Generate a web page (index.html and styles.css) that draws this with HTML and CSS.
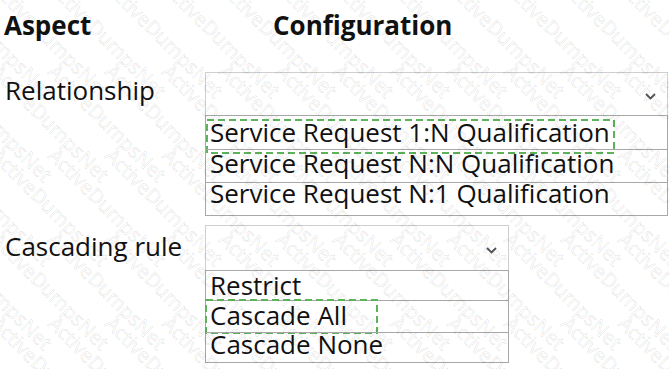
FILE: index.html
```html
<!DOCTYPE html>
<html lang="en">
<head>
<meta charset="utf-8">
<title>Aspect / Configuration</title>
<link rel="stylesheet" href="styles.css">
</head>
<body>
<div class="page">
  <div class="head">
    <div class="h-aspect">Aspect</div>
    <div class="h-config">Configuration</div>
  </div>

  <div class="row row-rel">
    <div class="label label-rel">Relationship</div>
    <div class="select select-rel">
      <div class="sel-head">
        <svg class="chev" width="11" height="7" viewBox="0 0 11 7"><path d="M1 1 L5.5 5.5 L10 1" fill="none" stroke="#555" stroke-width="1.8"/></svg>
      </div>
      <ul class="opts">
        <li class="opt o1">Service Request 1:N Qualification<svg class="pick pick-rel" viewBox="0 0 409 35" preserveAspectRatio="none"><rect x="1" y="1" width="407" height="33" fill="none" stroke="#5cb35a" stroke-width="2" stroke-dasharray="7 4"/></svg></li>
        <li class="opt o2">Service Request N:N Qualification</li>
        <li class="opt o3">Service Request N:1 Qualification</li>
      </ul>
    </div>
  </div>

  <div class="row row-casc">
    <div class="label label-casc">Cascading rule</div>
    <div class="select select-casc">
      <div class="sel-head sel-head-casc">
        <svg class="chev" width="11" height="7" viewBox="0 0 11 7"><path d="M1 1 L5.5 5.5 L10 1" fill="none" stroke="#555" stroke-width="1.8"/></svg>
      </div>
      <ul class="opts">
        <li class="opt c1">Restrict</li>
        <li class="opt c2">Cascade All<svg class="pick pick-casc" viewBox="0 0 173 35" preserveAspectRatio="none"><rect x="1" y="1" width="171" height="33" fill="none" stroke="#5cb35a" stroke-width="2" stroke-dasharray="7 4"/></svg></li>
        <li class="opt c3">Cascade None</li>
      </ul>
    </div>
  </div>

  <div class="wm" aria-hidden="true">
    <div class="wm-grid">
      <span>ActiveDumpsNet</span><span>ActiveDumpsNet</span><span>ActiveDumpsNet</span><span>ActiveDumpsNet</span><span>ActiveDumpsNet</span><span>ActiveDumpsNet</span><span>ActiveDumpsNet</span><span>ActiveDumpsNet</span><span>ActiveDumpsNet</span><span>ActiveDumpsNet</span><span>ActiveDumpsNet</span><span>ActiveDumpsNet</span><span>ActiveDumpsNet</span><span>ActiveDumpsNet</span>
      <span>ActiveDumpsNet</span><span>ActiveDumpsNet</span><span>ActiveDumpsNet</span><span>ActiveDumpsNet</span><span>ActiveDumpsNet</span><span>ActiveDumpsNet</span><span>ActiveDumpsNet</span><span>ActiveDumpsNet</span><span>ActiveDumpsNet</span><span>ActiveDumpsNet</span><span>ActiveDumpsNet</span><span>ActiveDumpsNet</span><span>ActiveDumpsNet</span><span>ActiveDumpsNet</span>
      <span>ActiveDumpsNet</span><span>ActiveDumpsNet</span><span>ActiveDumpsNet</span><span>ActiveDumpsNet</span><span>ActiveDumpsNet</span><span>ActiveDumpsNet</span><span>ActiveDumpsNet</span><span>ActiveDumpsNet</span><span>ActiveDumpsNet</span><span>ActiveDumpsNet</span><span>ActiveDumpsNet</span><span>ActiveDumpsNet</span><span>ActiveDumpsNet</span><span>ActiveDumpsNet</span>
      <span>ActiveDumpsNet</span><span>ActiveDumpsNet</span><span>ActiveDumpsNet</span><span>ActiveDumpsNet</span><span>ActiveDumpsNet</span><span>ActiveDumpsNet</span><span>ActiveDumpsNet</span><span>ActiveDumpsNet</span><span>ActiveDumpsNet</span><span>ActiveDumpsNet</span><span>ActiveDumpsNet</span><span>ActiveDumpsNet</span><span>ActiveDumpsNet</span><span>ActiveDumpsNet</span>
      <span>ActiveDumpsNet</span><span>ActiveDumpsNet</span><span>ActiveDumpsNet</span><span>ActiveDumpsNet</span><span>ActiveDumpsNet</span><span>ActiveDumpsNet</span><span>ActiveDumpsNet</span><span>ActiveDumpsNet</span><span>ActiveDumpsNet</span><span>ActiveDumpsNet</span><span>ActiveDumpsNet</span><span>ActiveDumpsNet</span><span>ActiveDumpsNet</span><span>ActiveDumpsNet</span>
      <span>ActiveDumpsNet</span><span>ActiveDumpsNet</span><span>ActiveDumpsNet</span><span>ActiveDumpsNet</span><span>ActiveDumpsNet</span><span>ActiveDumpsNet</span><span>ActiveDumpsNet</span><span>ActiveDumpsNet</span><span>ActiveDumpsNet</span><span>ActiveDumpsNet</span><span>ActiveDumpsNet</span><span>ActiveDumpsNet</span><span>ActiveDumpsNet</span><span>ActiveDumpsNet</span>
    </div>
  </div>
</div>
</body>
</html>
```

FILE: styles.css
```css
* { box-sizing: border-box; }

html, body {
  margin: 0;
  padding: 0;
  background: #ffffff;
}

body {
  font-family: "Open Sans", "Noto Sans", "DejaVu Sans", sans-serif;
  color: #111;
}

.page {
  position: relative;
  width: 669px;
  height: 369px;
  overflow: hidden;
  padding-top: 10px;
}

.head {
  display: flex;
  height: 30px;
  font-size: 26px;
  line-height: 30px;
  font-weight: 700;
}

.h-aspect {
  width: 273px;
  padding-left: 4px;
}

.row {
  display: flex;
  align-items: flex-start;
}

.row-rel { margin-top: 32px; }
.row-casc { margin-top: 9px; }

.label {
  width: 205px;
  padding-left: 5px;
  font-size: 26px;
  line-height: 30px;
}

.label-rel { padding-top: 3px; }
.label-casc { padding-top: 6px; }

.select-rel { width: 463px; }
.select-casc { width: 304px; }

.sel-head {
  height: 43px;
  border: 1px solid #cfcfcf;
  border-bottom: none;
  display: flex;
  justify-content: flex-end;
  align-items: center;
  padding: 4px 11px 0 0;
}

.sel-head-casc {
  height: 45px;
}

.chev { display: block; }

.opts {
  list-style: none;
  margin: 0;
  padding: 0;
  border: 1px solid #a8a8a8;
  border-top: none;
}

.opt {
  position: relative;
  border-top: 1px solid #a8a8a8;
  padding-left: 4px;
  font-size: 26px;
  white-space: nowrap;
}

.o1 { height: 34px; line-height: 32px; }
.o2 { height: 33px; line-height: 26px; }
.o3 { height: 33px; line-height: 20px; }

.c1 { height: 30px; line-height: 28px; }
.c2 { height: 32px; line-height: 28px; }
.c3 { height: 30px; line-height: 22px; }

.pick {
  position: absolute;
  pointer-events: none;
}

.pick-rel {
  left: 0;
  top: 3px;
  width: 409px;
  height: 35px;
}

.pick-casc {
  left: -1px;
  top: -2px;
  width: 173px;
  height: 35px;
}

.wm {
  position: absolute;
  inset: 0;
  overflow: hidden;
  pointer-events: none;
}

.wm-grid {
  position: absolute;
  left: -55px;
  top: -23px;
  display: grid;
  grid-template-columns: repeat(14, 57px);
  grid-auto-rows: 84px;
}

.wm-grid span {
  display: block;
  white-space: nowrap;
  font-family: "Open Sans", sans-serif;
  font-size: 20px;
  line-height: 20px;
  color: rgba(0, 0, 0, 0.015);
  -webkit-text-stroke: 0.5px rgba(0, 0, 0, 0.16);
  transform: rotate(45deg);
  transform-origin: 0 0;
}
```
